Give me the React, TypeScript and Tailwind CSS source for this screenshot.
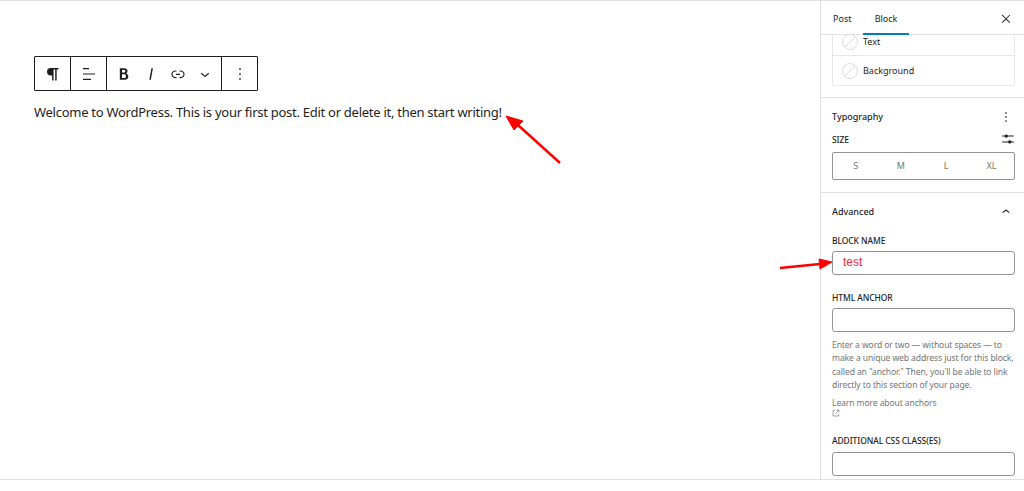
import React from 'react';

const NoColor = () => (
    <svg width="16" height="16" viewBox="0 0 16 16" className="shrink-0" fill="none" stroke="#dcdcde">
        <circle cx="8" cy="8" r="7.5" />
        <path d="M3 13 13 3" />
    </svg>
);

const Label = ({ children, className = '' }: { children: React.ReactNode; className?: string }) => (
    <div className={`text-[8.5px] leading-[12px] uppercase font-medium text-[#1e1e1e] tracking-[-0.1px] ${className}`}>{children}</div>
);

const TextBox = ({ value }: { value?: string }) => (
    <div className="h-[24px] border border-[#949494] rounded-[3px] pl-[10px] pb-[2px] flex items-center text-[12px] text-[#ff2a2a] font-['Liberation_Sans',sans-serif]">
        {value}
    </div>
);

const ToolGroup = ({ children, className = '' }: { children: React.ReactNode; className?: string }) => (
    <div className={`h-full flex items-center justify-center ${className}`}>{children}</div>
);

const FormatIcon = ({ children }: { children: React.ReactNode }) => (
    <div className="w-[27px] flex items-center justify-center">{children}</div>
);

const App: React.FC = () => {
    return (
        <div className="relative w-[1024px] h-[491px] overflow-hidden bg-white border-t border-[#e0e0e0] font-['Noto_Sans',sans-serif] text-[#1e1e1e]">
            <div className="flex h-[479px] border-b border-[#e0e0e0]">
                {/* Editor */}
                <div className="flex-1 pl-[34px] pt-[55px]">
                    <div className="flex w-[224px] h-[35px] border border-[#1e1e1e] rounded-[1px]">
                        <ToolGroup className="w-[36px] border-r border-[#1e1e1e]">
                            <svg width="22" height="22" viewBox="0 0 24 24" fill="#1e1e1e">
                                <path d="M18 5.5H9.5a4 4 0 0 0 0 8H11V19h1.6V7h1.8v12H16V7h2V5.5z" />
                            </svg>
                        </ToolGroup>
                        <ToolGroup className="w-[36px] border-r border-[#1e1e1e]">
                            <svg width="24" height="24" viewBox="0 0 24 24" fill="#1e1e1e">
                                <path d="M6 6h6v1.2H6zM6 11.4h12v1.2H6zM6 16.8h8V18H6z" />
                            </svg>
                        </ToolGroup>
                        <ToolGroup className="w-[115px] border-r border-[#1e1e1e]">
                            <FormatIcon>
                                <svg width="20" height="20" viewBox="0 0 24 24" fill="#1e1e1e">
                                    <path d="M14.7 11.3c1-.6 1.5-1.6 1.5-3 0-2.3-1.5-3.3-4.2-3.3H7v14h5.8c2.7 0 4.4-1.5 4.4-3.9 0-1.8-.9-3.2-2.5-3.8zM9.6 7.2h2.1c1.3 0 1.9.5 1.9 1.5s-.6 1.6-1.9 1.6H9.6V7.2zm2.4 9.6H9.6v-4.4H12c1.5 0 2.4.8 2.4 2.2 0 1.4-.9 2.2-2.4 2.2z" />
                                </svg>
                            </FormatIcon>
                            <FormatIcon>
                                <svg width="20" height="20" viewBox="0 0 24 24" fill="#1e1e1e">
                                    <path d="M12.5 5 L10 19h1.8l2.5-14z" />
                                </svg>
                            </FormatIcon>
                            <FormatIcon>
                                <svg width="18" height="18" viewBox="0 0 24 24" fill="#1e1e1e">
                                    <path d="M15.6 7.2H14v1.5h1.6c2 0 3.7 1.7 3.7 3.7s-1.7 3.7-3.7 3.7H14v1.5h1.6c2.8 0 5.2-2.3 5.2-5.2 0-2.9-2.3-5.2-5.2-5.2zM4.7 12.4c0-2 1.7-3.7 3.7-3.7H10V7.2H8.4c-2.9 0-5.2 2.3-5.2 5.2 0 2.9 2.3 5.2 5.2 5.2H10v-1.5H8.4c-2 0-3.7-1.7-3.7-3.7zm4.6.9h5.3v-1.5H9.3v1.5z" />
                                </svg>
                            </FormatIcon>
                            <FormatIcon>
                                <svg width="18" height="18" viewBox="0 0 24 24" fill="#1e1e1e">
                                    <path d="M17.5 11.6 12 16.4l-5.5-4.8 1-1.2 4.5 3.9 4.5-3.9 1 1.2z" />
                                </svg>
                            </FormatIcon>
                        </ToolGroup>
                        <ToolGroup className="flex-1">
                            <svg width="20" height="20" viewBox="0 0 24 24" fill="#1e1e1e">
                                <path d="M13 19h-2v-2h2v2zm0-6h-2v-2h2v2zm0-6h-2V5h2v2z" />
                            </svg>
                        </ToolGroup>
                    </div>
                    <p className="mt-[10px] text-[13px] leading-[22px] tracking-[-0.27px] whitespace-nowrap">
                        Welcome to WordPress. This is your first post. Edit or delete it, then start writing!
                    </p>
                </div>

                {/* Sidebar */}
                <div className="w-[204px] shrink-0 border-l border-[#e0e0e0] flex flex-col">
                    <div className="h-[34px] shrink-0 border-b border-[#e0e0e0] flex items-center text-[9px] text-[#1e1e1e]">
                        <div className="ml-[12px] w-[30px] pt-[2px]">Post</div>
                        <div className="relative w-[46px] h-full flex items-center justify-center pt-[2px]">
                            Block
                            <div className="absolute left-0 right-0 bottom-[-1px] h-[2px] bg-[#007cba]" />
                        </div>
                        <svg className="ml-auto mr-[10px] mt-[2px]" width="16" height="16" viewBox="0 0 24 24" fill="#1e1e1e">
                            <path d="m13 11.8 5.3-5.3-1-1-5.3 5.2-5.3-5.3-1 1.1 5.3 5.3-5.3 5.2 1 1.1 5.3-5.3 5.3 5.3 1-1.1z" />
                        </svg>
                    </div>

                    <div className="flex-1 overflow-hidden">
                        <div className="h-[63px] border-b border-[#e0e0e0] pl-[11px] pr-[9px]">
                            <div className="h-[51px] border border-t-0 border-[#e8e8e8] rounded-b-[2px] text-[9px] text-[#1e1e1e]">
                                <div className="h-[21px] border-b border-[#e8e8e8] pl-[9px] flex items-start gap-[5px] overflow-hidden">
                                    <div className="mt-[-1px]"><NoColor /></div>
                                    <span className="leading-[14px]">Text</span>
                                </div>
                                <div className="h-[30px] pl-[9px] flex items-center gap-[5px]">
                                    <NoColor />
                                    <span>Background</span>
                                </div>
                            </div>
                        </div>

                        <div className="h-[95px] border-b border-[#e0e0e0] pl-[11px] pr-[9px] pt-[12px]">
                            <div className="flex items-center justify-between h-[14px]">
                                <span className="text-[9px] font-medium">Typography</span>
                                <svg className="mr-[1px]" width="16" height="16" viewBox="0 0 24 24" fill="#1e1e1e">
                                    <path d="M13 19h-2v-2h2v2zm0-6h-2v-2h2v2zm0-6h-2V5h2v2z" />
                                </svg>
                            </div>
                            <div className="flex items-center justify-between mt-[10px] h-[12px]">
                                <Label>Size</Label>
                                <svg width="14" height="14" viewBox="0 0 24 24" fill="#1e1e1e" className="mt-[-3px]">
                                    <path d="M2 6.2h20v1.6H2zM2 16.2h20v1.6H2z" />
                                    <circle cx="9" cy="7" r="2.8" />
                                    <circle cx="15" cy="17" r="2.8" />
                                </svg>
                            </div>
                            <div className="mt-[6px] h-[28px] border border-[#949494] rounded-[2px] grid grid-cols-4 items-center text-center text-[9px] text-[#757575]">
                                <span>S</span>
                                <span>M</span>
                                <span className="text-[#8a6f5a]">L</span>
                                <span>XL</span>
                            </div>
                        </div>

                        <div className="pl-[11px] pr-[9px] pt-[12px]">
                            <div className="flex items-center justify-between h-[14px]">
                                <span className="text-[9px] font-medium">Advanced</span>
                                <svg width="16" height="16" viewBox="0 0 24 24" fill="#1e1e1e" className="mr-[1px]">
                                    <path d="M6.5 12.4 12 8l5.5 4.4-.9 1.2L12 10l-4.5 3.6z" />
                                </svg>
                            </div>
                            <Label className="mt-[16px] mb-[4px]">Block name</Label>
                            <TextBox value="test" />
                            <Label className="mt-[17px] mb-[4px]">HTML anchor</Label>
                            <TextBox />
                            <p className="mt-[7px] text-[8.6px] leading-[13.4px] tracking-[-0.12px] text-[#757575] whitespace-nowrap">
                                Enter a word or two — without spaces — to<br />
                                make a unique web address just for this block,<br />
                                called an "anchor." Then, you'll be able to link<br />
                                directly to this section of your page.
                            </p>
                            <div className="mt-[4px] text-[8.6px] leading-[13px] tracking-[-0.12px] text-[#757575]">Learn more about anchors</div>
                            <svg width="8" height="8" viewBox="0 0 24 24" fill="none" stroke="#757575" strokeWidth="2" className="mt-[-1px]">
                                <path d="M10 4H3v17h17v-7M14 3h7v7M21 3 10 14" />
                            </svg>
                            <Label className="mt-[18px] mb-[5px]">Additional CSS class(es)</Label>
                            <TextBox />
                        </div>
                    </div>
                </div>
            </div>

            {/* Annotation arrows */}
            <svg className="absolute left-0 top-0 pointer-events-none" width="1024" height="491" viewBox="0 0 1024 491">
                <path d="M560 162 518 124" stroke="#ff0000" strokeWidth="2.5" fill="none" />
                <path d="M506 115 523 120 514 129z" fill="#ff0000" stroke="#ff0000" />
                <path d="M780 267 820 263" stroke="#ff0000" strokeWidth="2.5" fill="none" />
                <path d="M832 261 819 258 820 268z" fill="#ff0000" stroke="#ff0000" />
            </svg>
        </div>
    );
};

export default App;
